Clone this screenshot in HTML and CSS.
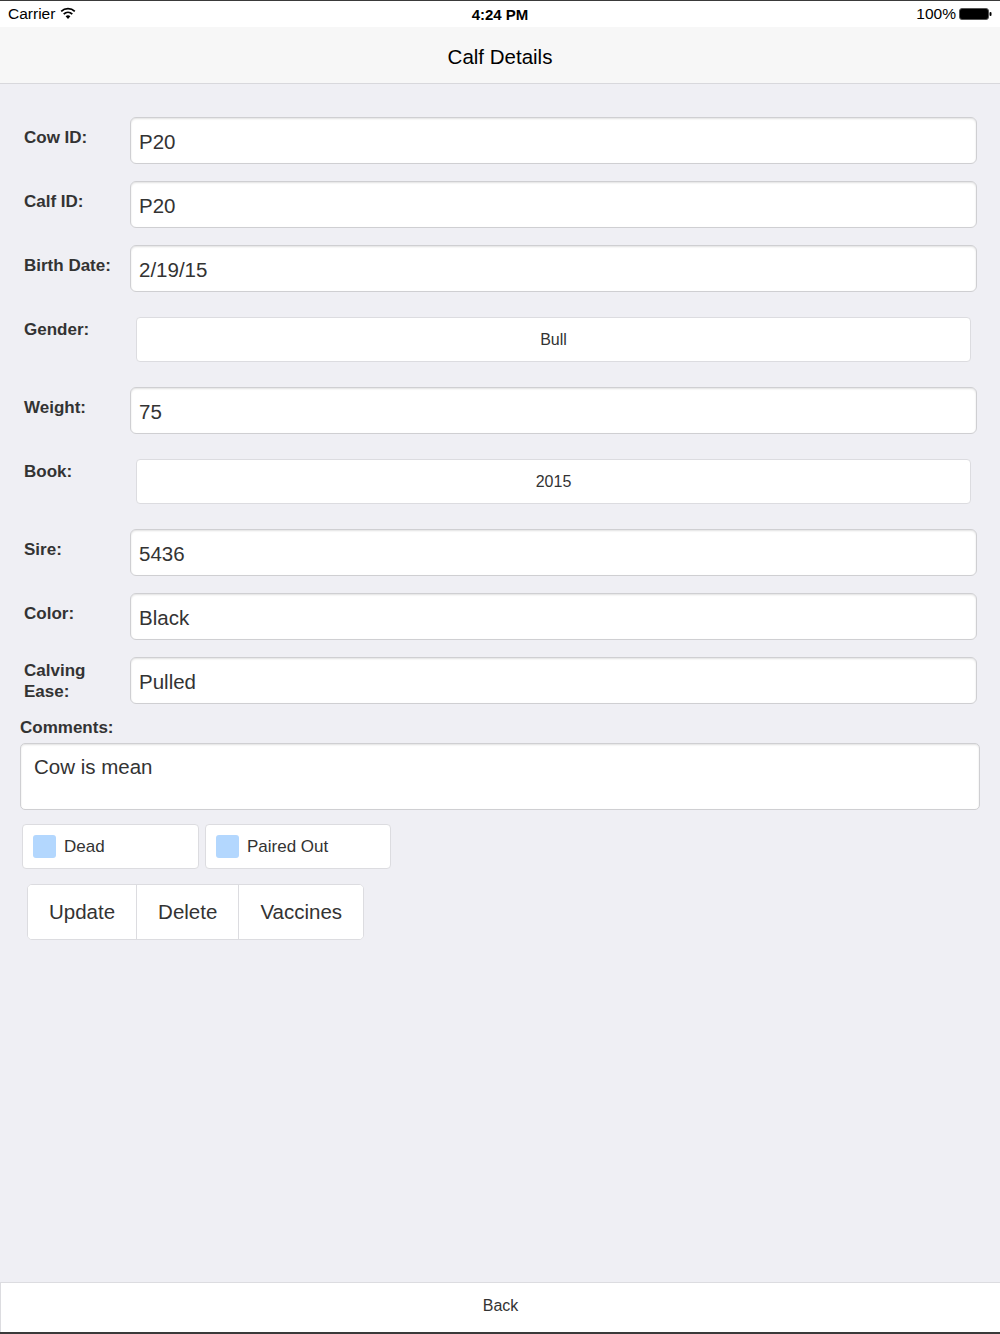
FILE: index.html
```html
<!DOCTYPE html>
<html lang="en">
	<head>
		<meta charset="UTF-8">
		<title>Calf Details</title>
		<link rel="stylesheet" href="styles.css">
	</head>
	<body>
		<div class="status">
			<div class="carrier">
				Carrier
				<svg class="wifi" width="16" height="12" viewBox="0 0 16 12">
					<path d="M8 12 L5.6 9.2 A3.6 3.6 0 0 1 10.4 9.2 Z" fill="#000"/>
					<path d="M3.7 7.1 A6.4 6.4 0 0 1 12.3 7.1" stroke="#000" stroke-width="1.8" fill="none"/>
					<path d="M1.2 4.3 A10 10 0 0 1 14.8 4.3" stroke="#000" stroke-width="1.8" fill="none"/>
				</svg>
			</div>
			<div class="time">4:24 PM</div>
			<div class="battery">
				100%
				<svg width="33" height="12" viewBox="0 0 33 12">
					<rect x="0.5" y="0.5" width="29" height="11" rx="2.5" fill="#000" stroke="#555"/>
					<rect x="30.5" y="4" width="2" height="4" rx="1" fill="#000"/>
				</svg>
			</div>
		</div>
		<div class="navbar">Calf Details</div>

		<div class="content">
			<div class="row">
				<div class="label">Cow ID:</div>
				<input class="field" type="text" value="P20">
			</div>
			<div class="row">
				<div class="label">Calf ID:</div>
				<input class="field" type="text" value="P20">
			</div>
			<div class="row">
				<div class="label">Birth Date:</div>
				<input class="field" type="text" value="2/19/15">
			</div>
			<div class="row row-select">
				<div class="label">Gender:</div>
				<button class="picker">Bull</button>
			</div>
			<div class="row">
				<div class="label">Weight:</div>
				<input class="field" type="text" value="75">
			</div>
			<div class="row row-select">
				<div class="label">Book:</div>
				<button class="picker">2015</button>
			</div>
			<div class="row">
				<div class="label">Sire:</div>
				<input class="field" type="text" value="5436">
			</div>
			<div class="row">
				<div class="label">Color:</div>
				<input class="field" type="text" value="Black">
			</div>
			<div class="row row-last">
				<div class="label label-two">Calving<br>Ease:</div>
				<input class="field" type="text" value="Pulled">
			</div>

			<div class="comments-label">Comments:</div>
			<textarea class="comments">Cow is mean</textarea>

			<div class="checks">
				<label class="check check-dead"><span class="box"></span>Dead</label>
				<label class="check check-paired"><span class="box"></span>Paired Out</label>
			</div>

			<div class="actions">
				<button class="action">Update</button>
				<button class="action">Delete</button>
				<button class="action">Vaccines</button>
			</div>
		</div>

		<div class="back">Back</div>
	</body>
</html>
```

FILE: styles.css
```css
* {
	box-sizing: border-box;
}
html, body {
	margin: 0;
	height: 100%;
}
body {
	font-family: "Liberation Sans", Arial, sans-serif;
	background-color: #efeff4;
	color: #333;
	display: flex;
	flex-direction: column;
	border-top: 1px solid #3a3a3a;
	border-bottom: 2px solid #3a3a3a;
}
.status {
	height: 26px;
	background-color: #fff;
	display: flex;
	align-items: center;
	justify-content: space-between;
	padding: 0 8px 0 8px;
	font-size: 15.5px;
	color: #000;
}
.carrier {
	width: 140px;
	display: flex;
	align-items: center;
	gap: 5px;
}
.wifi {
	margin-top: -3px;
}
.time {
	font-weight: bold;
	font-size: 15px;
}
.battery {
	width: 140px;
	display: flex;
	align-items: center;
	justify-content: flex-end;
	gap: 3px;
}
.navbar {
	height: 57px;
	background-color: #f7f7f7;
	border-bottom: 1px solid #d8d8dc;
	display: flex;
	align-items: center;
	justify-content: center;
	font-size: 20.5px;
	color: #000;
	padding-top: 3px;
}
.content {
	flex: 1;
	padding: 33px 23px 0 23px;
}
.row {
	display: flex;
	margin-bottom: 17px;
}
.row-select {
	padding: 8px 0;
}
.row-last {
	margin-bottom: 14px;
}
.label {
	width: 107px;
	flex-shrink: 0;
	font-weight: bold;
	font-size: 17px;
	line-height: 20px;
	padding-top: 11px;
	padding-left: 1px;
}
.row-select .label {
	margin-top: -8px;
}
.label-two {
	padding-top: 3px;
	line-height: 21px;
}
.field {
	flex: 1;
	height: 47px;
	border: 1px solid #cfcfd2;
	border-radius: 6px;
	background-color: #fff;
	box-shadow: inset 0 1px 2px rgba(0, 0, 0, 0.12);
	font-family: "Liberation Sans", Arial, sans-serif;
	font-size: 20.5px;
	color: #333;
	padding: 2px 8px 0 8px;
	margin: 0;
	outline: none;
}
.picker {
	flex: 1;
	height: 45px;
	margin: 0 6px;
	border: 1px solid #dcdce0;
	border-radius: 4px;
	background-color: #fff;
	font-family: "Liberation Sans", Arial, sans-serif;
	font-size: 16px;
	color: #333;
}
.comments-label {
	font-weight: bold;
	font-size: 17px;
	line-height: 20px;
	margin: 0 0 5px -3px;
}
.comments {
	display: block;
	width: 960px;
	height: 67px;
	margin: 0 0 0 -3px;
	border: 1px solid #cfcfd2;
	border-radius: 5px;
	background-color: #fff;
	box-shadow: inset 0 1px 2px rgba(0, 0, 0, 0.12);
	font-family: "Liberation Sans", Arial, sans-serif;
	font-size: 20.5px;
	color: #333;
	padding: 11px 13px;
	resize: none;
	outline: none;
}
.checks {
	display: flex;
	gap: 6px;
	margin: 14px 0 0 -1px;
}
.check {
	height: 45px;
	background-color: #fff;
	border: 1px solid #dcdce0;
	border-radius: 4px;
	display: flex;
	align-items: center;
	padding-left: 10px;
	font-size: 17px;
	color: #333;
}
.check-dead {
	width: 177px;
}
.check-paired {
	width: 186px;
}
.box {
	width: 23px;
	height: 23px;
	background-color: #b3d7fe;
	border-radius: 3px;
	margin-right: 8px;
}
.actions {
	display: inline-flex;
	margin: 15px 0 0 4px;
	background-color: #fff;
	border: 1px solid #dcdce0;
	border-radius: 5px;
	overflow: hidden;
}
.action {
	height: 54px;
	padding: 0 21px;
	border: none;
	border-left: 1px solid #dcdce0;
	background-color: #fff;
	font-family: "Liberation Sans", Arial, sans-serif;
	font-size: 20.5px;
	color: #333;
}
.action:first-child {
	border-left: none;
}
.back {
	height: 50px;
	background-color: #fff;
	border-top: 1px solid #dcdce0;
	border-left: 1px solid #dcdce0;
	display: flex;
	align-items: center;
	justify-content: center;
	font-size: 16px;
	color: #333;
	padding-bottom: 4px;
}
```
